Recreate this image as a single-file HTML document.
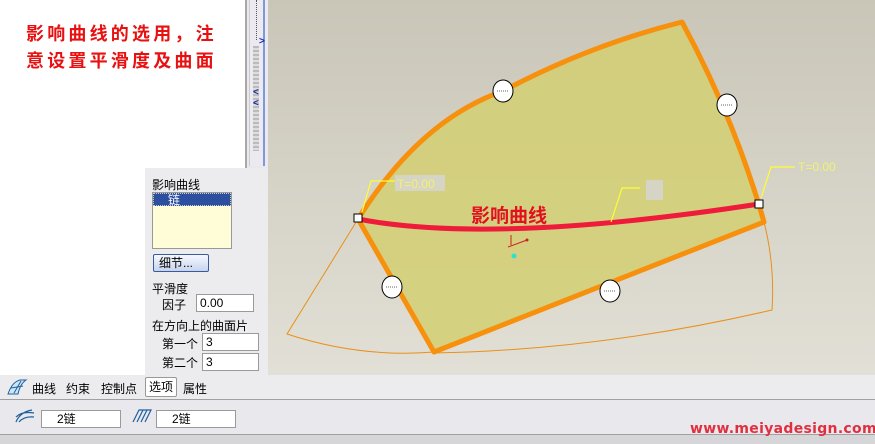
<!DOCTYPE html>
<html><head><meta charset="utf-8"><style>
*{margin:0;padding:0;box-sizing:border-box}
body{width:875px;height:444px;overflow:hidden;position:relative;font-family:"Liberation Sans","Noto Sans CJK SC",sans-serif;font-size:12px;background:#e9e8ec}
.abs{position:absolute}
.inp{position:absolute;background:#fff;border:1px solid #9a9a9a;font-size:12px;padding-left:3px;line-height:16px;height:18px}
</style></head><body>
<div class="abs" style="left:268px;top:0;width:607px;height:375px;background:linear-gradient(#c9c6b8,#e2e0d6)"></div>
<svg class="abs" style="left:0;top:0" width="875" height="375">
<path d="M358,219 L287,334 Q360,358 434,352 M764,222 Q775,265 772,310 Q600,350 434,353" fill="none" stroke="#e8901a" stroke-width="1"/>
<path d="M358,219 Q420,120 503,91 Q590,45 682,22 Q735,120 764,222 L434,352 Z" fill="#d2cf72" fill-opacity="0.85" stroke="#f7900c" stroke-width="5" stroke-linejoin="round"/>
<path d="M358,219 Q492,245 759,204" fill="none" stroke="#ee1c3a" stroke-width="5"/>
<g fill="none" stroke="#ffff30" stroke-width="1.2"><path d="M362,212 L371,181 L395,181"/><path d="M761,198 L771,167 L795,167"/><path d="M611,222 L622,188 L640,188"/></g>
<rect x="395" y="175" width="50" height="16" fill="#d6d4c4"/>
<rect x="646" y="180" width="17" height="20" fill="#d6d4c4"/>
<text x="397" y="188" fill="#f2f270" font-size="12">T=0.00</text>
<text x="798" y="171" fill="#f2f270" font-size="12">T=0.00</text>
<text x="471" y="222" fill="#e31020" font-size="19" font-weight="bold" font-family="Noto Sans CJK SC">影响曲线</text>
<path d="M511,245 L511,235 M508,247 L527,240" stroke="#d02020" stroke-width="1"/><circle cx="527" cy="240" r="1.5" fill="#d02020"/>
<circle cx="514" cy="256" r="2.5" fill="#30e0d0"/>
<g fill="#fff" stroke="#000" stroke-width="1">
<ellipse cx="503" cy="91" rx="10" ry="11"/><ellipse cx="727" cy="105" rx="10" ry="11"/><ellipse cx="392" cy="287" rx="10" ry="11"/><ellipse cx="610" cy="291" rx="10" ry="11"/>
<rect x="354" y="214" width="8" height="8"/><rect x="755" y="200" width="8" height="8"/></g>
<g stroke="#666" stroke-dasharray="1,1"><path d="M497,91h12M721,105h12M386,287h12M604,291h12"/></g>
</svg>
<div class="abs" style="left:0;top:0;width:247px;height:375px;background:#fff;border-right:2px solid #a8a8a8"></div>
<div class="abs" style="left:26px;top:20px;color:#e81010;font-size:18px;letter-spacing:3.2px;font-weight:bold;line-height:27px;font-family:'Noto Sans CJK SC',sans-serif">影响曲线的选用，注<br>意设置平滑度及曲面</div>
<div class="abs" style="left:249px;top:0;width:19px;height:166px;background:#eceaf0;border-left:1px solid #ccc"></div>
<div class="abs" style="left:263px;top:0;width:2px;height:166px;background:#7c9ad8"></div>
<div class="abs" style="left:256px;top:0;height:40px;border-left:1px dotted #555"></div>
<div class="abs" style="left:253px;top:46px;width:6px;height:105px;background:repeating-linear-gradient(#bbb 0 2px,#ddd 2px 4px)"></div>
<div class="abs" style="left:259px;top:36px;color:#1a2aa0;font-size:10px;font-weight:bold">&gt;</div>
<div class="abs" style="left:253px;top:87px;color:#1a2aa0;font-size:10px;font-weight:bold;line-height:11px">&lt;<br>&lt;</div>
<div class="abs" style="left:145px;top:168px;width:123px;height:207px;background:#ecebee"></div>
<div class="abs" style="left:152px;top:176px">影响曲线</div>
<div class="abs" style="left:152px;top:192px;width:80px;height:57px;background:#fffdd8;border:1px solid #999"><div style="background:#2c4fa0;color:#fff;height:13px;line-height:13px;padding-left:14px;border:1px dotted #ccc">链</div></div>
<div class="abs" style="left:153px;top:254px;width:56px;height:18px;border:1px solid #3a5aa0;border-radius:2px;background:linear-gradient(#f6f8ff,#c8d4ec);line-height:16px;padding-left:5px">细节...</div>
<div class="abs" style="left:152px;top:280px">平滑度</div>
<div class="abs" style="left:162px;top:296px">因子</div>
<div class="inp" style="left:196px;top:294px;width:58px">0.00</div>
<div class="abs" style="left:152px;top:317px">在方向上的曲面片</div>
<div class="abs" style="left:162px;top:335px">第一个</div>
<div class="inp" style="left:202px;top:333px;width:57px">3</div>
<div class="abs" style="left:162px;top:354px">第二个</div>
<div class="inp" style="left:202px;top:353px;width:57px">3</div>
<div class="abs" style="left:0;top:375px;width:875px;height:25px;background:#ecebee;border-bottom:1px solid #a0a0a0"></div>
<svg class="abs" style="left:6px;top:378px" width="22" height="18"><path d="M2,16 Q6,4 14,2 L20,2 Q14,6 12,16 Z M5,10 L17,8 M8,15 L15,3" fill="#cde8f4" stroke="#2060a0" stroke-width="1"/></svg>
<div class="abs" style="left:32px;top:380px">曲线</div>
<div class="abs" style="left:66px;top:380px">约束</div>
<div class="abs" style="left:101px;top:380px">控制点</div>
<div class="abs" style="left:145px;top:377px;width:32px;height:20px;border:1px solid #999;border-radius:2px;background:#fff;line-height:18px;padding-left:3px">选项</div>
<div class="abs" style="left:183px;top:380px">属性</div>
<svg class="abs" style="left:14px;top:408px" width="22" height="16"><path d="M2,14 Q6,4 18,2 M2,9 Q8,3 20,5 M5,14 Q10,8 20,9" fill="none" stroke="#2060a0" stroke-width="1.2"/></svg>
<div class="inp" style="left:41px;top:410px;width:80px;padding-left:15px">2链</div>
<svg class="abs" style="left:131px;top:408px" width="22" height="16"><path d="M2,14 L8,2 L20,2 L14,14 M6,14 L12,2 M10,14 L16,2" fill="none" stroke="#2060a0" stroke-width="1.2"/></svg>
<div class="inp" style="left:156px;top:410px;width:80px;padding-left:15px">2链</div>
<div class="abs" style="left:0;top:434px;width:875px;height:10px;background:#d6d5d8;border-top:1px solid #a0a0a0"></div>
<div class="abs" style="left:690px;top:421px;color:#e03040;font-size:14px;font-weight:bold;font-family:'DejaVu Sans',sans-serif;letter-spacing:0.3px">www.meiyadesign.com</div>
</body></html>
